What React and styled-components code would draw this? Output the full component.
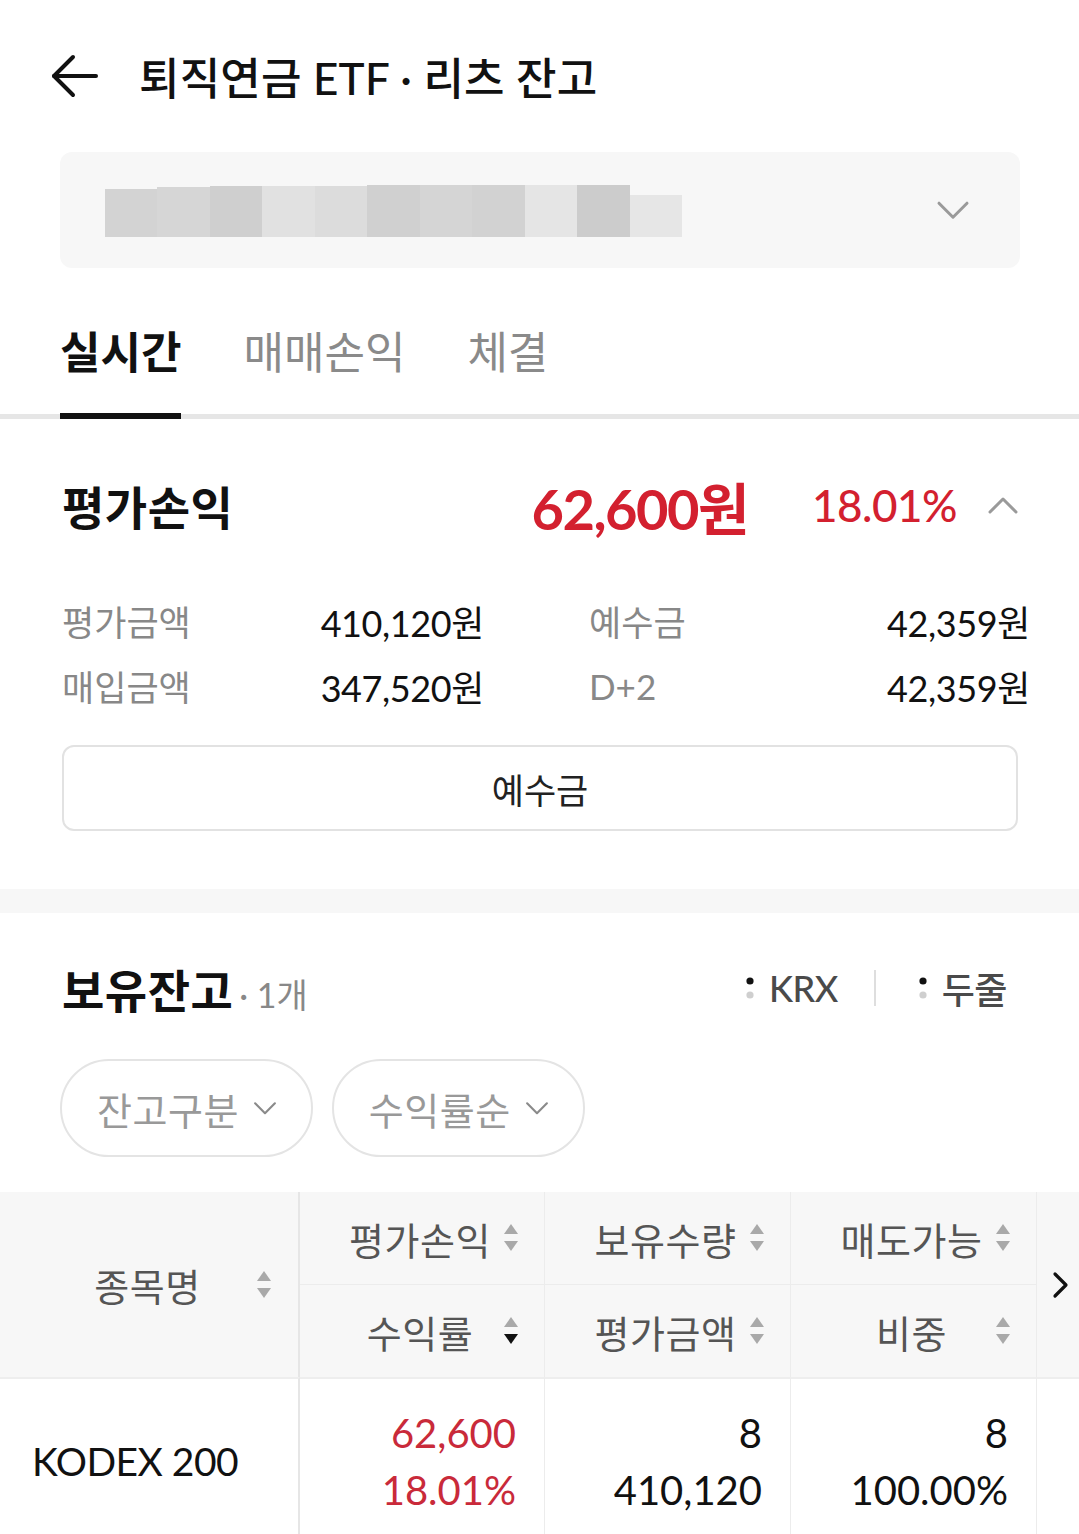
import React from 'react';
import styled, { createGlobalStyle } from 'styled-components';

const GlobalStyle = createGlobalStyle`
  html, body {
    margin: 0;
    padding: 0;
    background: #ffffff;
  }
  body {
    font-family: Lato, "Noto Sans CJK KR", sans-serif;
    color: #111;
  }
  * {
    box-sizing: border-box;
  }
`;

const RED = '#d3202f';

const Page = styled.div`
  width: 1079px;
  overflow: hidden;
`;

const Header = styled.header`
  display: flex;
  align-items: center;
  height: 152px;
  padding-left: 50px;
  gap: 41px;
`;

const Title = styled.h1`
  margin: 0;
  font-size: 44px;
  font-weight: 500;
  letter-spacing: 0.2px;
  color: #111;
`;

const AccountSelect = styled.div`
  margin: 0 59px 0 60px;
  height: 116px;
  background: #f7f7f7;
  border-radius: 12px;
  display: flex;
  align-items: center;
  justify-content: space-between;
  padding: 0 50px 0 45px;
`;

const Mosaic = styled.div`
  display: flex;
  align-items: flex-end;
  height: 54px;
`;

const MosaicCell = styled.div`
  width: ${(p) => p.$w}px;
  height: ${(p) => p.$h}px;
  background: ${(p) => p.$shade};
`;

const TabBar = styled.nav`
  display: flex;
  height: 151px;
  padding: 0 60px;
  gap: 62px;
  box-shadow: inset 0 -5px 0 #e6e6e6;
`;

const Tab = styled.div`
  display: flex;
  align-items: center;
  padding-top: 18px;
  font-size: 44px;
  letter-spacing: 0;
  font-weight: ${(p) => (p.$active ? 600 : 400)};
  color: ${(p) => (p.$active ? '#111' : '#8a8a8a')};
  border-bottom: 6px solid ${(p) => (p.$active ? '#111' : 'transparent')};
`;

const Summary = styled.section`
  padding: 50px 61px 58px 62px;
`;

const SummaryHead = styled.div`
  display: flex;
  align-items: center;
  justify-content: space-between;
  height: 72px;
`;

const SectionTitle = styled.h2`
  margin: 0;
  font-size: 46px;
  font-weight: 700;
  letter-spacing: 0.5px;
  color: #111;
  display: flex;
  align-items: baseline;
`;

const ProfitGroup = styled.div`
  display: flex;
  align-items: center;
`;

const ProfitAmount = styled.span`
  font-size: 56px;
  font-weight: 700;
  letter-spacing: -1.5px;
  color: ${RED};
`;

const ProfitRate = styled.span`
  margin-left: 64px;
  font-size: 44px;
  font-weight: 500;
  letter-spacing: -0.5px;
  color: ${RED};
`;

const IconSlot = styled.span`
  display: inline-flex;
  margin-left: ${(p) => p.$gap || 0}px;
`;

const InfoGrid = styled.div`
  display: grid;
  grid-template-columns: 422px 441px;
  column-gap: 105px;
  margin-top: 47px;
  margin-right: -12px;
`;

const InfoPair = styled.div`
  display: flex;
  align-items: center;
  justify-content: space-between;
  height: 65px;
`;

const InfoLabel = styled.span`
  font-size: 35px;
  letter-spacing: 0;
  color: #888;
`;

const InfoValue = styled.span`
  font-size: 36px;
  letter-spacing: -0.4px;
  color: #111;
`;

const OutlineButton = styled.button`
  display: block;
  width: 100%;
  height: 86px;
  margin-top: 27px;
  border: 2px solid #e2e2e2;
  border-radius: 12px;
  background: #fff;
  font-family: inherit;
  font-size: 35px;
  letter-spacing: 0;
  color: #222;
`;

const Band = styled.div`
  height: 24px;
  background: #f7f7f7;
`;

const Holdings = styled.section`
  padding: 45px 72px 0 62px;
`;

const HoldingsHead = styled.div`
  display: flex;
  align-items: center;
  justify-content: space-between;
  height: 60px;
`;

const Count = styled.span`
  font-size: 34px;
  font-weight: 400;
  letter-spacing: 0;
  color: #888;
  margin-left: 6px;
`;

const ToggleGroup = styled.div`
  display: flex;
  align-items: center;
`;

const Toggle = styled.span`
  display: flex;
  align-items: center;
  gap: 15px;
  font-size: 36px;
  font-weight: 500;
  letter-spacing: -0.5px;
  color: #4a4a4a;
`;

const VDivider = styled.span`
  width: 2px;
  height: 36px;
  background: #dedede;
  margin: 0 43px 0 36px;
`;

const FilterRow = styled.div`
  display: flex;
  gap: 19px;
  margin: 41px 0 0 -2px;
`;

const Pill = styled.button`
  display: flex;
  align-items: center;
  gap: 14px;
  height: 98px;
  padding: 0 34px 0 35px;
  border: 2px solid #e4e4e4;
  border-radius: 49px;
  background: #fff;
  font-family: inherit;
  font-size: 38px;
  letter-spacing: 0.5px;
  color: #999;
`;

const Table = styled.div`
  margin-top: 35px;
  display: grid;
  grid-template-columns: 300px 245px 246px 246px 1fr;
  grid-template-rows: 93px 92px auto;
`;

const HeadCell = styled.div`
  display: flex;
  align-items: center;
  background: #f7f7f7;
  padding: 0 25px 0 45px;
  border-right: 1px solid #ececec;
  border-bottom: ${(p) => (p.$top ? '1px solid #ececec' : '0')};
  font-size: 38px;
  letter-spacing: 0.5px;
  color: #555;
`;

const NameHeadCell = styled(HeadCell)`
  grid-row: 1 / span 2;
  padding: 0 26px 0 47px;
  border-right: 2px solid #e6e6e6;
`;

const MoreCell = styled.div`
  grid-row: 1 / span 2;
  grid-column: 5;
  display: flex;
  align-items: center;
  justify-content: center;
  padding-left: 4px;
  background: #f7f7f7;
`;

const HeadText = styled.span`
  flex: 1;
  text-align: center;
  margin-right: 8px;
  white-space: nowrap;
`;

const BodyCell = styled.div`
  border-top: 2px solid #eeeeee;
  border-right: ${(p) => (p.$first ? '2px solid #e6e6e6' : '1px solid #ececec')};
  min-height: 167px;
  padding: 26px 28px 0 0;
  display: flex;
  flex-direction: column;
  align-items: flex-end;
  font-size: 40px;
  letter-spacing: 0;
  line-height: 57px;
  color: ${(p) => (p.$red ? '#c92a3a' : '#111')};
`;

const NameCell = styled(BodyCell)`
  align-items: flex-start;
  justify-content: center;
  padding: 0 0 0 32px;
  font-size: 39px;
  letter-spacing: -0.5px;
`;

const EndCell = styled.div`
  border-top: 2px solid #eeeeee;
`;

const BackArrow = () => (
  <svg width="48" height="44" viewBox="0 0 48 44" fill="none" stroke="#111" strokeWidth="4" strokeLinecap="round" strokeLinejoin="round">
    <path d="M46 22 H4" />
    <path d="M23 3 L4 22 L23 41" />
  </svg>
);

const ChevronDown = ({ size = 34, color = '#999', stroke = 3 }) => (
  <svg width={size} height={size * 0.6} viewBox="0 0 34 20" fill="none" stroke={color} strokeWidth={stroke} strokeLinecap="round" strokeLinejoin="round">
    <path d="M3 3 L17 17 L31 3" />
  </svg>
);

const ChevronUp = () => (
  <svg width="30" height="18" viewBox="0 0 30 18" fill="none" stroke="#9a9a9a" strokeWidth="3" strokeLinecap="round" strokeLinejoin="round">
    <path d="M2 16 L15 3 L28 16" />
  </svg>
);

const ChevronRight = () => (
  <svg width="18" height="28" viewBox="0 0 18 28" fill="none" stroke="#111" strokeWidth="3.2" strokeLinecap="round" strokeLinejoin="round">
    <path d="M4 3 L15 14 L4 25" />
  </svg>
);

const Dots = () => (
  <svg width="8" height="24" viewBox="0 0 8 24">
    <circle cx="4" cy="5" r="3.6" fill="#111" />
    <circle cx="4" cy="19" r="3.6" fill="#cfcfcf" />
  </svg>
);

const SortIcon = ({ active }) => (
  <svg width="16" height="30" viewBox="0 0 16 30">
    <polygon points="1,11 8,1 15,11" fill="#a9a9a9" />
    <polygon points="1,18 15,18 8,28" fill={active ? '#111' : '#a9a9a9'} />
  </svg>
);

const mosaic = [
  { w: 52, h: 48, shade: '#d3d3d3' },
  { w: 53, h: 50, shade: '#d6d6d6' },
  { w: 52, h: 51, shade: '#cfcfcf' },
  { w: 53, h: 51, shade: '#e1e1e1' },
  { w: 52, h: 51, shade: '#dcdcdc' },
  { w: 53, h: 52, shade: '#d0d0d0' },
  { w: 52, h: 52, shade: '#d5d5d5' },
  { w: 53, h: 52, shade: '#d2d2d2' },
  { w: 52, h: 52, shade: '#e5e5e5' },
  { w: 53, h: 52, shade: '#cccccc' },
  { w: 52, h: 42, shade: '#e6e6e6' },
];

const headTop = [
  { label: '평가손익' },
  { label: '보유수량' },
  { label: '매도가능' },
];

const headBottom = [
  { label: '수익률', active: true },
  { label: '평가금액' },
  { label: '비중' },
];

const rows = [
  {
    name: 'KODEX 200',
    cells: [
      { lines: ['62,600', '18.01%'], red: true },
      { lines: ['8', '410,120'] },
      { lines: ['8', '100.00%'] },
    ],
  },
];

const App = () => {
  return (
    <Page>
      <GlobalStyle />
      <Header>
        <BackArrow />
        <Title>퇴직연금 ETF · 리츠 잔고</Title>
      </Header>

      <AccountSelect>
        <Mosaic>
          {mosaic.map((m, i) => (
            <MosaicCell key={i} $w={m.w} $h={m.h} $shade={m.shade} />
          ))}
        </Mosaic>
        <ChevronDown size={34} color="#9a9a9a" />
      </AccountSelect>

      <TabBar>
        <Tab $active>실시간</Tab>
        <Tab>매매손익</Tab>
        <Tab>체결</Tab>
      </TabBar>

      <Summary>
        <SummaryHead>
          <SectionTitle>평가손익</SectionTitle>
          <ProfitGroup>
            <ProfitAmount>62,600원</ProfitAmount>
            <ProfitRate>18.01%</ProfitRate>
            <IconSlot $gap={31}>
              <ChevronUp />
            </IconSlot>
          </ProfitGroup>
        </SummaryHead>

        <InfoGrid>
          <InfoPair>
            <InfoLabel>평가금액</InfoLabel>
            <InfoValue>410,120원</InfoValue>
          </InfoPair>
          <InfoPair>
            <InfoLabel>예수금</InfoLabel>
            <InfoValue>42,359원</InfoValue>
          </InfoPair>
          <InfoPair>
            <InfoLabel>매입금액</InfoLabel>
            <InfoValue>347,520원</InfoValue>
          </InfoPair>
          <InfoPair>
            <InfoLabel>D+2</InfoLabel>
            <InfoValue>42,359원</InfoValue>
          </InfoPair>
        </InfoGrid>

        <OutlineButton>예수금</OutlineButton>
      </Summary>

      <Band />

      <Holdings>
        <HoldingsHead>
          <SectionTitle>
            보유잔고<Count>· 1개</Count>
          </SectionTitle>
          <ToggleGroup>
            <Toggle>
              <Dots />
              KRX
            </Toggle>
            <VDivider />
            <Toggle>
              <Dots />
              두줄
            </Toggle>
          </ToggleGroup>
        </HoldingsHead>

        <FilterRow>
          <Pill>
            잔고구분
            <ChevronDown size={24} color="#8a8a8a" stroke={3} />
          </Pill>
          <Pill>
            수익률순
            <ChevronDown size={24} color="#8a8a8a" stroke={3} />
          </Pill>
        </FilterRow>
      </Holdings>

      <Table>
        <NameHeadCell>
          <HeadText>종목명</HeadText>
          <SortIcon />
        </NameHeadCell>
        {headTop.map((h) => (
          <HeadCell key={h.label} $top>
            <HeadText>{h.label}</HeadText>
            <SortIcon active={h.active} />
          </HeadCell>
        ))}
        <MoreCell>
          <ChevronRight />
        </MoreCell>
        {headBottom.map((h) => (
          <HeadCell key={h.label}>
            <HeadText>{h.label}</HeadText>
            <SortIcon active={h.active} />
          </HeadCell>
        ))}

        {rows.map((r) => (
          <React.Fragment key={r.name}>
            <NameCell $first>{r.name}</NameCell>
            {r.cells.map((c, i) => (
              <BodyCell key={i} $red={c.red}>
                {c.lines.map((l) => (
                  <span key={l}>{l}</span>
                ))}
              </BodyCell>
            ))}
            <EndCell />
          </React.Fragment>
        ))}
      </Table>
    </Page>
  );
};

export default App;
